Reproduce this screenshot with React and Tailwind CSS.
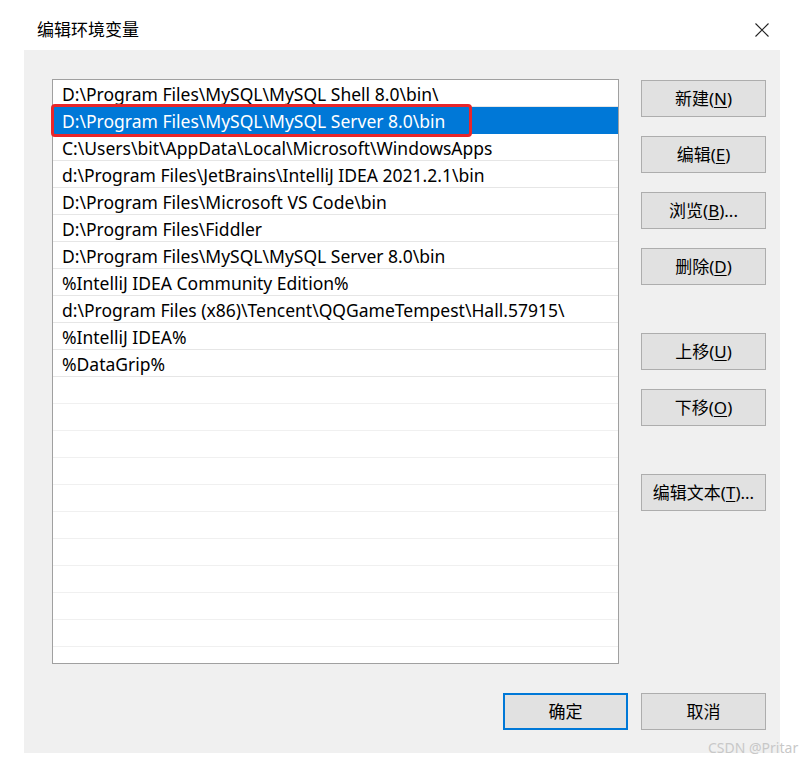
import React from 'react';

const paths = [
  'D:\\Program Files\\MySQL\\MySQL Shell 8.0\\bin\\',
  'D:\\Program Files\\MySQL\\MySQL Server 8.0\\bin',
  'C:\\Users\\bit\\AppData\\Local\\Microsoft\\WindowsApps',
  'd:\\Program Files\\JetBrains\\IntelliJ IDEA 2021.2.1\\bin',
  'D:\\Program Files\\Microsoft VS Code\\bin',
  'D:\\Program Files\\Fiddler',
  'D:\\Program Files\\MySQL\\MySQL Server 8.0\\bin',
  '%IntelliJ IDEA Community Edition%',
  'd:\\Program Files (x86)\\Tencent\\QQGameTempest\\Hall.57915\\',
  '%IntelliJ IDEA%',
  '%DataGrip%',
];

const font = { fontFamily: '"Noto Sans", "Noto Sans CJK SC", sans-serif' };

const Btn = ({ label, hotkey, tail = '', className = '' }) => (
  <button
    className={`w-[125px] h-[37px] bg-[#e1e1e1] border border-[#adadad] text-[17px] text-black flex items-center justify-center ${className}`}
  >
    {label}
    {hotkey && (
      <>
        (<span className="underline underline-offset-2">{hotkey}</span>){tail}
      </>
    )}
  </button>
);

export default function App() {
  const emptyRows = Array.from({ length: 11 });

  return (
    <div className="relative w-[810px] h-[764px] bg-white overflow-hidden" style={font}>
      {/* title bar */}
      <div className="h-[50px] flex items-center justify-between pt-[10px] pl-[37px] pr-[41px]">
        <span className="text-[17px] text-black">编辑环境变量</span>
        <svg width="14" height="14" viewBox="0 0 14 14" className="mt-[-1px]">
          <path d="M0.5 0.5 L13.5 13.5 M13.5 0.5 L0.5 13.5" stroke="#222" strokeWidth="1.1" fill="none" />
        </svg>
      </div>

      {/* dialog body */}
      <div className="ml-[24px] w-[756px] h-[703px] bg-[#f0f0f0] pt-[29px] pl-[28px] pr-[14px] flex flex-col">
        <div className="flex gap-[22px]">
          <div className="relative w-[567px] h-[585px] bg-white border border-[#a0a0a0] overflow-hidden">
            {paths.map((p, i) => (
              <div
                key={i}
                className={`h-[27px] border-b flex items-center pl-[9px] pt-[2px] text-[17.5px] whitespace-nowrap ${
                  i === 1
                    ? 'bg-[#0078d7] text-white border-[#0078d7]'
                    : 'text-black border-[#e6e6e6]'
                }`}
              >
                {p}
              </div>
            ))}
            {emptyRows.map((_, i) => (
              <div key={`e${i}`} className="h-[27px] border-b border-[#f0f0f0]" />
            ))}
          </div>

          <div className="flex flex-col pt-[1px]">
            <Btn label="新建" hotkey="N" />
            <Btn label="编辑" hotkey="E" className="mt-[19px]" />
            <Btn label="浏览" hotkey="B" tail="..." className="mt-[19px]" />
            <Btn label="删除" hotkey="D" className="mt-[19px]" />
            <Btn label="上移" hotkey="U" className="mt-[48px]" />
            <Btn label="下移" hotkey="O" className="mt-[19px]" />
            <Btn label="编辑文本" hotkey="T" tail="..." className="mt-[48px]" />
          </div>
        </div>

        <div className="flex justify-end gap-[13px] mt-[29px]">
          <button className="w-[125px] h-[37px] bg-[#e1e1e1] border-2 border-[#0078d7] text-[17px] text-black">
            确定
          </button>
          <Btn label="取消" />
        </div>
      </div>

      {/* red annotation box */}
      <div className="absolute left-[51px] top-[104px] w-[421px] h-[33px] border-[3px] border-[#e8262a] rounded-[4px]" />

      {/* watermark */}
      <div className="absolute left-[708px] top-[737px] text-[14px] text-[#c8c8c8]">
        CSDN @Pritar
      </div>
    </div>
  );
}
